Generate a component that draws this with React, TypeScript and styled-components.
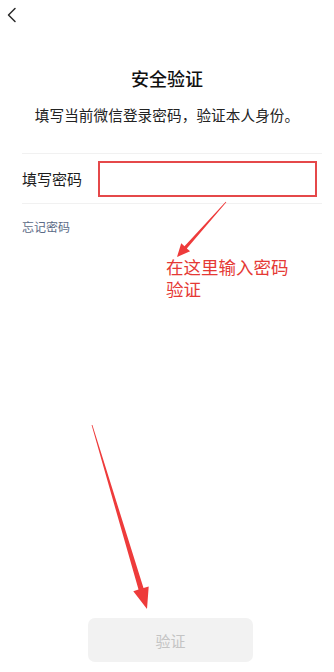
import React from "react";
import styled, { createGlobalStyle } from "styled-components";

const Global = createGlobalStyle`
  html, body { margin: 0; padding: 0; background: #ffffff; }
  body { font-family: "Noto Sans CJK SC", "Noto Sans", sans-serif; }
  * { box-sizing: border-box; }
`;

const Page = styled.div`
  position: relative;
  width: 334px;
  height: 672px;
  overflow: hidden;
  display: flex;
  flex-direction: column;
  background: #fff;
`;

const TopBar = styled.div`
  height: 30px;
  display: flex;
  align-items: flex-start;
  padding: 7px 0 0 6px;
`;

const Header = styled.div`
  display: flex;
  flex-direction: column;
  align-items: center;
  margin-top: 35px;
`;

const Title = styled.h1`
  margin: 0;
  font-size: 18px;
  line-height: 26px;
  font-weight: 500;
  color: #111;
`;

const Subtitle = styled.p`
  margin: 14px 0 0;
  font-size: 14.6px;
  line-height: 20px;
  color: #222;
  letter-spacing: 0.1px;
`;

const Form = styled.div`
  margin: 28px 12px 0 22px;
`;

const Row = styled.div`
  display: flex;
  align-items: center;
  height: 51px;
  border-top: 1px solid #f1f1f1;
  border-bottom: 1px solid #f1f1f1;
`;

const Label = styled.span`
  width: 76px;
  font-size: 15px;
  color: #1c1c1c;
  flex-shrink: 0;
`;

const InputBox = styled.div`
  flex: 1;
  height: 36px;
  margin-right: 5px;
  border: 2px solid #e5484a;
`;

const Forgot = styled.a`
  display: block;
  margin-top: 14px;
  font-size: 12px;
  line-height: 18px;
  color: #5a6a86;
  text-decoration: none;
`;

const Footer = styled.div`
  margin-top: auto;
  padding: 0 0 10px 88px;
`;

const VerifyButton = styled.button`
  width: 165px;
  height: 44px;
  border: none;
  border-radius: 7px;
  background: #f2f2f2;
  color: #c4c4c4;
  font-family: inherit;
  font-size: 15px;
`;

const Overlay = styled.svg`
  position: absolute;
  left: 0;
  top: 0;
  pointer-events: none;
`;

const Note = styled.div`
  position: absolute;
  left: 166px;
  top: 257px;
  display: flex;
  flex-direction: column;
  font-family: "Liberation Sans", "Noto Sans CJK SC", sans-serif;
  font-size: 17.5px;
  line-height: 22px;
  color: #e53935;
`;

const NoteLine = styled.span`
  display: block;
  height: 22px;
`;

type Pt = [number, number];

function arrowPoints(tail: Pt, tip: Pt, headLen: number, headHalf: number, shaftHalf: number): string {
  const dx = tip[0] - tail[0];
  const dy = tip[1] - tail[1];
  const len = Math.hypot(dx, dy);
  const ux = dx / len;
  const uy = dy / len;
  const nx = -uy;
  const ny = ux;
  const bx = tip[0] - ux * headLen;
  const by = tip[1] - uy * headLen;
  const pts: Pt[] = [
    [tail[0] + nx * 0.4, tail[1] + ny * 0.4],
    [bx + nx * shaftHalf, by + ny * shaftHalf],
    [bx + nx * headHalf, by + ny * headHalf],
    tip,
    [bx - nx * headHalf, by - ny * headHalf],
    [bx - nx * shaftHalf, by - ny * shaftHalf],
    [tail[0] - nx * 0.4, tail[1] - ny * 0.4],
  ];
  return pts.map((p) => `${p[0].toFixed(1)},${p[1].toFixed(1)}`).join(" ");
}

const BackIcon = () => (
  <svg width="12" height="16" viewBox="0 0 12 16">
    <path d="M9 1.5 L2.5 8 L9 14.5" fill="none" stroke="#2a2a2a" strokeWidth="1.5" strokeLinecap="round" strokeLinejoin="round" />
  </svg>
);

export default function App() {
  return (
    <>
      <Global />
      <Page>
        <TopBar>
          <BackIcon />
        </TopBar>
        <Header>
          <Title>安全验证</Title>
          <Subtitle>填写当前微信登录密码，验证本人身份。</Subtitle>
        </Header>
        <Form>
          <Row>
            <Label>填写密码</Label>
            <InputBox />
          </Row>
          <Forgot>忘记密码</Forgot>
        </Form>
        <Footer>
          <VerifyButton>验证</VerifyButton>
        </Footer>
        <Overlay width="334" height="672" viewBox="0 0 334 672">
          <polygon points={arrowPoints([226, 202], [177, 257], 13, 6, 1.6)} fill="#ee3b3b" />
          <polygon points={arrowPoints([92, 425], [147, 609], 21, 8, 2.6)} fill="#ee3b3b" />
        </Overlay>
        <Note>
          <NoteLine>在这里输入密码</NoteLine>
          <NoteLine>验证</NoteLine>
        </Note>
      </Page>
    </>
  );
}
